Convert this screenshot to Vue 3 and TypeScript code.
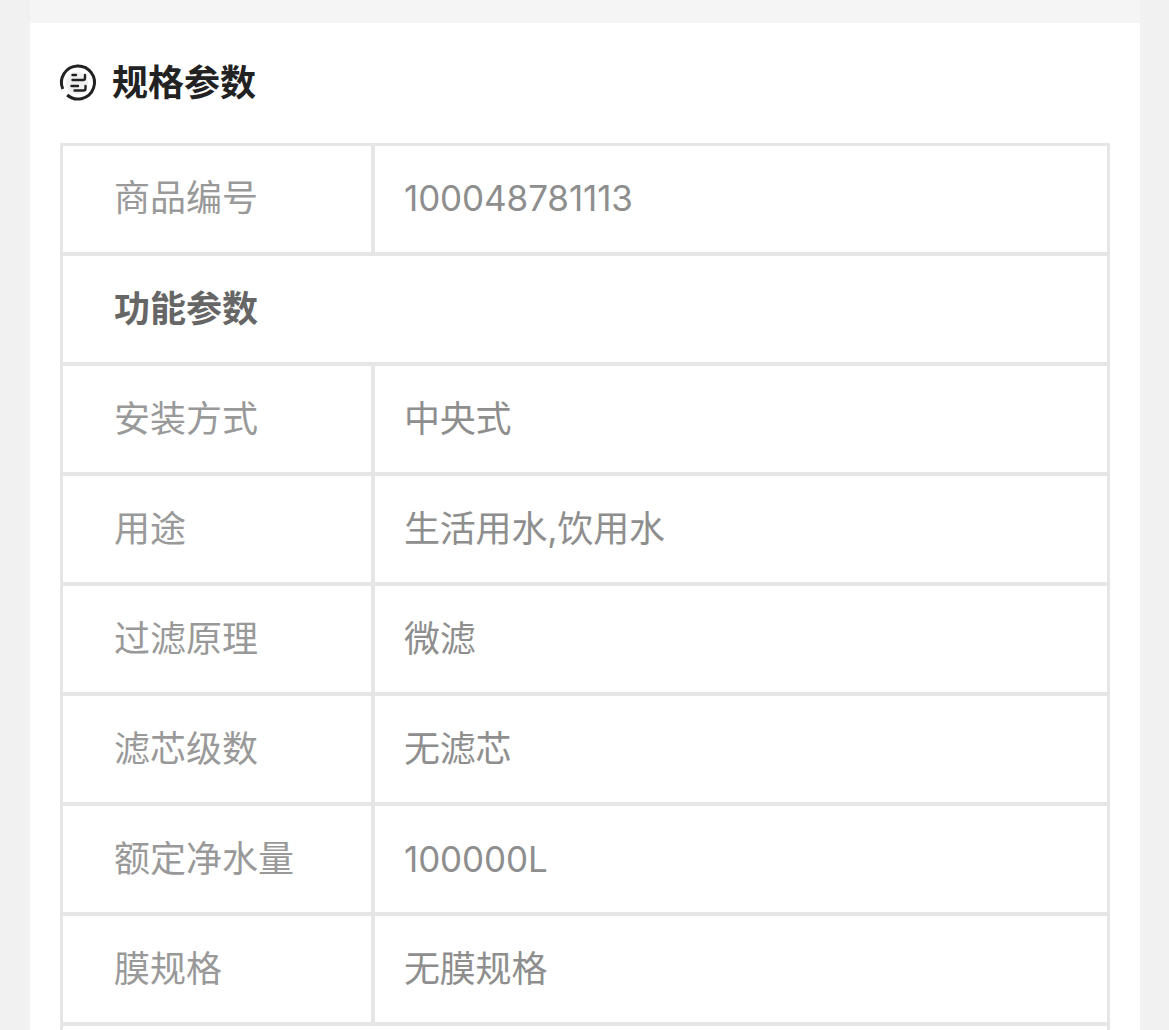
<script setup lang="ts">
interface Row {
  label: string
  value?: string
  group?: boolean
  latin?: boolean
}

const rows: Row[] = [
  { label: '商品编号', value: '100048781113', latin: true },
  { label: '功能参数', group: true },
  { label: '安装方式', value: '中央式' },
  { label: '用途', value: '生活用水,饮用水' },
  { label: '过滤原理', value: '微滤' },
  { label: '滤芯级数', value: '无滤芯' },
  { label: '额定净水量', value: '100000L', latin: true },
  { label: '膜规格', value: '无膜规格' },
  { label: '', group: true }
]
</script>

<template>
  <div class="page">
    <div class="strip"></div>
    <section class="card">
      <header class="head">
        <svg class="icon" width="38" height="38" viewBox="0 0 38 38" fill="none" aria-hidden="true">
          <circle cx="17" cy="19" r="11" fill="#f0f0f0" />
          <path d="M7.2 31A16.5 16.5 0 1 0 2.8 25" stroke="#222" stroke-width="3" />
          <path
            d="M12.5 11h3.5M12.5 16h10.5c1.3 0 2-.8 2-2v-3M11.5 22h6.5M14.5 26.5h9c1.3 0 2-.8 2-2V22"
            stroke="#222"
            stroke-width="2.4"
            stroke-linecap="round"
          />
        </svg>
        <h2 class="title">规格参数</h2>
      </header>
      <div class="table">
        <div v-for="(row, i) in rows" :key="i" class="row">
          <div class="label" :class="{ group: row.group }">{{ row.label }}</div>
          <div v-if="!row.group" class="value" :class="{ latin: row.latin }">{{ row.value }}</div>
        </div>
      </div>
    </section>
  </div>
</template>

<style>
html,
body {
  margin: 0;
  background: #f1f1f1;
  overflow: hidden;
}
</style>

<style scoped>
.page {
  width: 1110px;
  height: 1030px;
  margin-left: 30px;
  overflow: hidden;
  font-family: Inter, "Noto Sans CJK SC", sans-serif;
}
.strip {
  height: 23px;
  background: #f5f5f5;
}
.card {
  height: 1007px;
  padding: 0 30px;
  background: #fff;
  box-sizing: border-box;
}
.head {
  display: flex;
  align-items: center;
  gap: 14px;
  height: 120px;
}
.icon {
  flex: none;
  overflow: visible;
}
.title {
  margin: 0;
  font-size: 36px;
  line-height: 50px;
  font-weight: 700;
  color: #222;
}
.table {
  border: 3px solid #e6e6e6;
  border-bottom: 0;
}
.row {
  display: flex;
  height: 106px;
  border-bottom: 4px solid #e6e6e6;
  font-size: 36px;
  line-height: 107px;
}
.row:first-child {
  line-height: 105px;
}
.label {
  width: 308px;
  padding-left: 51px;
  box-sizing: border-box;
  color: #999;
  flex: none;
}
.label.group {
  width: auto;
  font-weight: 700;
  color: #666;
}
.value {
  flex: 1;
  padding-left: 29px;
  border-left: 4px solid #e6e6e6;
  color: #8e8e8e;
  letter-spacing: -0.2px;
}
.value.latin {
  font-size: 35px;
  letter-spacing: -0.1px;
}
</style>
